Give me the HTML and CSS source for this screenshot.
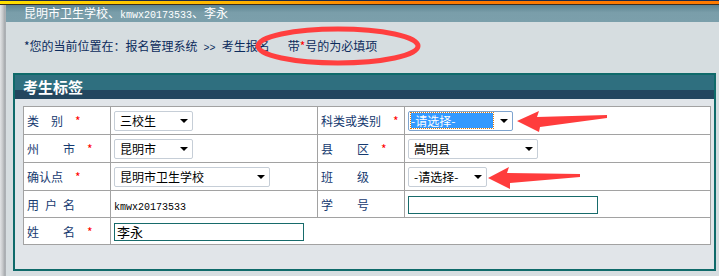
FILE: index.html
```html
<!DOCTYPE html>
<html lang="zh-CN">
<head>
    <meta charset="UTF-8">
    <title>考生报名</title>
    <link rel="stylesheet" href="styles.css">
</head>
<body>
    <div class="topline"></div>
    <div class="wrap">
        <div class="edge"></div>
        <div class="main">
            <div class="titlebar">昆明市卫生学校、<span class="mono">kmwx20173533</span>、李永</div>
            <div class="crumb">*您的当前位置在：报名管理系统&ensp;<span class="mono">&gt;&gt;</span>&ensp;考生报名<span class="hint">带<span class="req">*</span>号的为必填项</span></div>
            <div class="panel">
                <div class="panel-head">考生标签</div>
                <div class="panel-body">
                    <table class="form">
                        <colgroup>
                            <col class="c-label">
                            <col class="c-val">
                            <col class="c-label">
                            <col class="c-val2">
                        </colgroup>
                        <tr class="r28">
                            <td class="lbl">类　别　<span class="req">*</span></td>
                            <td><span class="sel w79"><span>三校生</span><i class="arr"></i></span></td>
                            <td class="lbl">科类或类别　<span class="req">*</span></td>
                            <td><span class="sel sel-focus w105"><span class="hl">-请选择-</span><i class="arr"></i></span></td>
                        </tr>
                        <tr class="r28">
                            <td class="lbl">州　　市　<span class="req">*</span></td>
                            <td><span class="sel w79"><span>昆明市</span><i class="arr"></i></span></td>
                            <td class="lbl">县　　区　<span class="req">*</span></td>
                            <td><span class="sel w130"><span>嵩明县</span><i class="arr"></i></span></td>
                        </tr>
                        <tr class="r28">
                            <td class="lbl">确认点　<span class="req">*</span></td>
                            <td><span class="sel w156"><span>昆明市卫生学校</span><i class="arr"></i></span></td>
                            <td class="lbl">班　　级</td>
                            <td><span class="sel w79"><span>-请选择-</span><i class="arr"></i></span></td>
                        </tr>
                        <tr class="r27">
                            <td class="lbl">用&ensp;户&ensp;名</td>
                            <td><span class="mono">kmwx20173533</span></td>
                            <td class="lbl">学　　号</td>
                            <td><span class="txt"></span></td>
                        </tr>
                        <tr class="r27">
                            <td class="lbl">姓　　名　<span class="req">*</span></td>
                            <td colspan="3"><span class="txt">李永</span></td>
                        </tr>
                    </table>
                </div>
            </div>
        </div>
    </div>

    <svg class="marks" width="719" height="276" viewBox="0 0 719 276">
        <ellipse cx="338" cy="46" rx="80" ry="17" fill="none" stroke="#ff3f3f" stroke-width="5"/>
        <polygon points="517,121 539,111 537,117 607,115 607,118 540,127 539,132" fill="#ff3c3c"/>
        <polygon points="488,178 509,167 507,173 580,174 580,177 510,183 510,189" fill="#ff3c3c"/>
    </svg>
</body>
</html>
```

FILE: styles.css
```css
body {
    margin: 0;
    padding: 0;
    width: 719px;
    height: 276px;
    overflow: hidden;
    position: relative;
    background: #d6dde0;
    font-family: "Noto Sans CJK SC", "Liberation Sans", sans-serif;
    font-size: 12px;
}
.mono {
    font-family: "Liberation Mono", "DejaVu Sans Mono", monospace;
    font-size: 10px;
}
.topline {
    height: 5px;
    background:
        linear-gradient(to bottom, #1b2a4c 0, #1b2a4c 1px, transparent 1px, transparent 4px, #3b2e22 4px),
        linear-gradient(to right, #ffe000 0, #ffb000 35%, #ff7a00 55%, #ff7a00 100%);
}
.wrap {
    display: flex;
    height: 271px;
}
.edge {
    width: 6px;
    background: linear-gradient(to right, #e2e4e6, #c6c8ca 45%, #a2a6aa 85%, #b9bdc1);
}
.main {
    flex: 1;
}
.titlebar {
    height: 17px;
    line-height: 16px;
    padding-left: 18px;
    color: #fff;
    background: linear-gradient(to bottom, #5d8390, #7a9eaa 45%, #7b9fab);
}
.crumb {
    height: 51px;
    line-height: 47px;
    padding-left: 18px;
    color: #0b2b5c;
}
.hint {
    margin-left: 18px;
}
.req {
    color: #ff0000;
}
.panel {
    margin: 0 3px 0 7px;
    border: 2px solid #0f6a6a;
    background: #e1e5e9;
}
.panel-head {
    height: 24px;
    line-height: 24px;
    padding-left: 8px;
    color: #fff;
    font-weight: bold;
    font-size: 15px;
    background: linear-gradient(to bottom, #2f6f7f 0, #2f6f7f 15px, #23465f 15px);
}
.panel-body {
    padding: 7px 0 24px 8px;
}
.form {
    table-layout: fixed;
    width: 687px;
    border-collapse: collapse;
    background: #fff;
}
.c-label {
    width: 87px;
}
.c-val {
    width: 207px;
}
.c-val2 {
    width: 306px;
}
.form td {
    border: 1px solid #a2a2a2;
    padding: 0 0 0 3px;
    vertical-align: middle;
    white-space: nowrap;
}
.r28 {
    height: 28px;
}
.r27 {
    height: 27px;
}
.lbl {
    color: #163a70;
}
.sel {
    display: inline-flex;
    align-items: center;
    justify-content: space-between;
    box-sizing: border-box;
    height: 20px;
    padding: 0 4px 0 5px;
    border: 1px solid #c6ced7;
    border-radius: 2px;
    background: #fff;
    color: #000;
    vertical-align: middle;
}
.w79 {
    width: 79px;
}
.w105 {
    width: 105px;
}
.w130 {
    width: 130px;
}
.w156 {
    width: 156px;
}
.sel-focus {
    border-color: #7ea4cf;
    padding-left: 2px;
}
.hl {
    display: inline-block;
    width: 82px;
    height: 15px;
    line-height: 15px;
    background: #3399ff;
    color: #fff;
    outline: 1px dotted #d97a10;
}
.arr {
    width: 0;
    height: 0;
    border-left: 4px solid transparent;
    border-right: 4px solid transparent;
    border-top: 4px solid #000;
}
.txt {
    display: inline-block;
    box-sizing: border-box;
    width: 190px;
    height: 18px;
    line-height: 16px;
    padding-left: 2px;
    border: 1px solid #176b6b;
    background: #fff;
    color: #000;
    vertical-align: middle;
    font-size: 13px;
}
.marks {
    position: absolute;
    top: 0;
    left: 0;
    pointer-events: none;
}
```
